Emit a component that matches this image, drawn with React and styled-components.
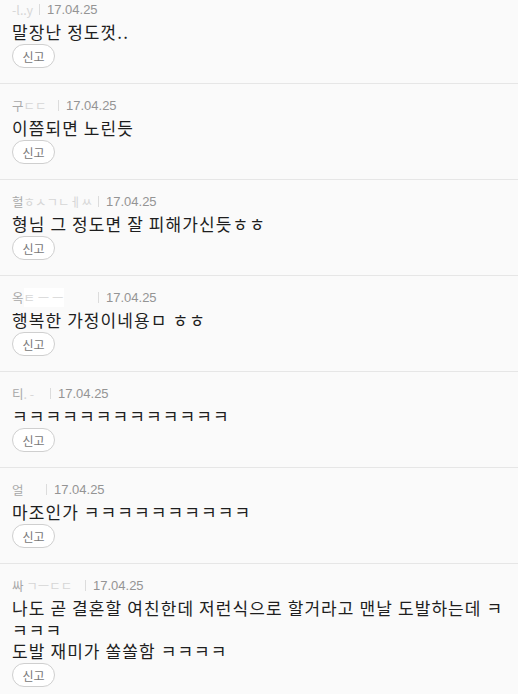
import React from 'react';
import styled, {createGlobalStyle} from 'styled-components';

const GlobalStyle = createGlobalStyle`
  html, body {
    margin: 0;
    padding: 0;
    background: #fafafa;
  }
  body {
    font-family: "Noto Sans CJK KR", "Liberation Sans", sans-serif;
  }
`

const List = styled.ul`
  list-style: none;
  margin: -12px 0 0;
  padding: 0;
`

const Item = styled.li`
  padding: 12px 4px 15px 12px;
  border-bottom: 1px solid #e6e6e6;
`

const Meta = styled.div`
  display: flex;
  align-items: center;
  height: 18px;
  font-family: "Liberation Sans", "Noto Sans CJK KR", sans-serif;
  font-size: 13px;
  color: #999;
`

const Nick = styled.span`
  display: inline-block;
  width: ${(p) => p.$w}px;
  white-space: nowrap;
  overflow: hidden;
  font-family: "Noto Sans CJK KR", sans-serif;
  font-size: 12.5px;
  color: #a8a8a8;
`

const Blur = styled.span`
  color: #d6d6d6;
  background: ${(p) => (p.$hide ? '#fff' : 'transparent')};
`

const Bar = styled.span`
  width: 1px;
  height: 11px;
  margin: 0 7px 0 5px;
  background: #dcdcdc;
`

const Date = styled.span`
  color: #949494;
`

const Text = styled.p`
  margin: 3px 0 0;
  font-size: 17px;
  line-height: 21.5px;
  letter-spacing: 1.1px;
  color: #1e1e1e;
  white-space: pre-line;
`

const ReportButton = styled.button`
  display: block;
  margin-top: 1.5px;
  width: 43px;
  height: 24px;
  padding: 0;
  border: 1px solid #cfcfcf;
  border-radius: 12px;
  background: #fff;
  font-family: "Noto Sans CJK KR", sans-serif;
  font-size: 12px;
  color: #777;
`

const comments = [
    {id: 1, nick: ['', '-l..y'], w: 22, text: '말장난 정도껏..'},
    {id: 2, nick: ['구', 'ㄷㄷ'], w: 41, text: '이쯤되면 노린듯'},
    {id: 3, nick: ['헐', 'ㅎㅅㄱㄴㅔㅆ'], w: 81, text: '형님 그 정도면 잘 피해가신듯ㅎㅎ'},
    {id: 4, nick: ['옥', 'ㅌ      ㅡ   ㅡ'], w: 81, hide: true, text: '행복한 가정이네용ㅁ ㅎㅎ'},
    {id: 5, nick: ['티', '. -'], w: 33, text: 'ㅋㅋㅋㅋㅋㅋㅋㅋㅋㅋㅋㅋㅋ'},
    {id: 6, nick: ['얼', '     '], w: 29, hide: true, text: '마조인가 ㅋㅋㅋㅋㅋㅋㅋㅋㅋㅋ'},
    {
        id: 7,
        nick: ['싸', ' ㄱㅡㄷㄷ'],
        w: 68,
        text: '나도 곧 결혼할 여친한데 저런식으로 할거라고 맨날 도발하는데 ㅋㅋㅋㅋ\n도발 재미가 쏠쏠함 ㅋㅋㅋㅋ',
    },
];

const App = () => {
    return (
        <>
            <GlobalStyle/>
            <List>
                {comments.map(({id, nick, w, hide, text}) => (
                    <Item key={id}>
                        <Meta>
                            <Nick $w={w}>
                                {nick[0]}
                                <Blur $hide={hide}>{nick[1]}</Blur>
                            </Nick>
                            <Bar/>
                            <Date>17.04.25</Date>
                        </Meta>
                        <Text>{text}</Text>
                        <ReportButton>신고</ReportButton>
                    </Item>
                ))}
            </List>
        </>
    );
};

export default App;
